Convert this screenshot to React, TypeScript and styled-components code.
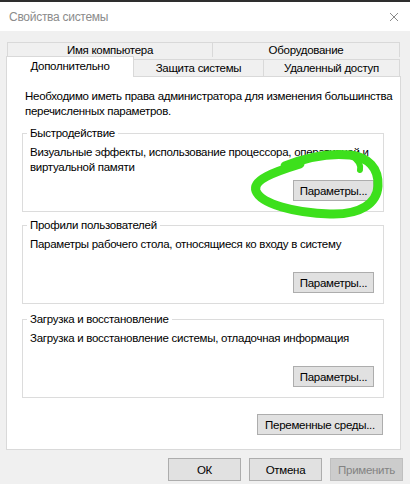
import * as React from 'react';
import styled, { createGlobalStyle } from 'styled-components';

const GlobalStyle = createGlobalStyle`
    html, body {
        margin: 0;
        padding: 0;
        background: #f0f0f0;
    }
    body {
        font-family: "Liberation Sans", Arial, sans-serif;
        font-size: 11.5px;
        letter-spacing: -0.28px;
        color: #000;
    }
`

type Group = {
    title: string,
    lines: string[]
}

const groups: Group[] = [
    { title: 'Быстродействие', lines: ['Визуальные эффекты, использование процессора, оперативной и', 'виртуальной памяти'] },
    { title: 'Профили пользователей', lines: ['Параметры рабочего стола, относящиеся ко входу в систему'] },
    { title: 'Загрузка и восстановление', lines: ['Загрузка и восстановление системы, отладочная информация'] },
]

export default function App() {
    return (
        <Window>
            <GlobalStyle />
            <TopEdge />
            <TitleBar>
                <Title>Свойства системы</Title>
                <svg width="10" height="10" viewBox="0 0 10 10">
                    <path d="M1 1 L9 9 M9 1 L1 9" stroke="#8a8a8a" strokeWidth="1" fill="none" />
                </svg>
            </TitleBar>
            <Body>
                <TabRowBack>
                    <BackTab $width={206}>Имя компьютера</BackTab>
                    <BackTab $width={188}>Оборудование</BackTab>
                </TabRowBack>
                <TabRowFront>
                    <ActiveTab>Дополнительно</ActiveTab>
                    <FrontTab $width={131}>Защита системы</FrontTab>
                    <FrontTab $width={137}>Удаленный доступ</FrontTab>
                </TabRowFront>
                <Panel>
                    <Intro>
                        <Line>Необходимо иметь права администратора для изменения большинства</Line>
                        <Line>перечисленных параметров.</Line>
                    </Intro>
                    {groups.map((g, i) =>
                        <GroupBox key={i} $top={i === 0 ? 7 : i === 1 ? 6 : 8}>
                            <Legend>{g.title}</Legend>
                            <GroupText>
                                {g.lines.map((l, j) => <Line key={j}>{l}</Line>)}
                            </GroupText>
                            <ButtonRow>
                                <Button $width={81} $height={21}>Параметры...</Button>
                            </ButtonRow>
                        </GroupBox>
                    )}
                    <EnvRow>
                        <Button $width={126} $height={21}>Переменные среды...</Button>
                    </EnvRow>
                </Panel>
                <Footer>
                    <Button $width={73} $height={23}>ОК</Button>
                    <Button $width={73} $height={23}>Отмена</Button>
                    <Button $width={73} $height={23} disabled>Применить</Button>
                </Footer>
            </Body>
            <Scribble width="410" height="484" viewBox="0 0 410 484">
                <path
                    d="M300 164 C274 172, 252 180, 256 191 C261 204, 295 213, 330 214 C361 215, 377 203, 378 186 C379 168, 368 157, 350 155 C330 153, 307 157, 285 166"
                    stroke="#3de01c" strokeWidth="9" strokeLinecap="round" fill="none" />
                <path d="M352 156 C358 160, 361 165, 360 170" stroke="#3de01c" strokeWidth="6" strokeLinecap="round" fill="none" />
            </Scribble>
        </Window>
    )
}

const Window = styled.div`
    position: relative;
    width: 410px;
    height: 484px;
    overflow: hidden;
    display: flex;
    flex-direction: column;
    background: #f0f0f0;
`
const TopEdge = styled.div`
    height: 2px;
    background: #2e2e2e;
`
const TitleBar = styled.div`
    height: 29px;
    background: #fff;
    display: flex;
    align-items: center;
    justify-content: space-between;
    padding: 0 11px 0 9px;
`
const Title = styled.span`
    color: #8c8c8c;
    font-size: 12px;
`
const Body = styled.div`
    padding: 11px 7px 0 6px;
    display: flex;
    flex-direction: column;
`
const TabRowBack = styled.div`
    display: flex;
    height: 15px;
    margin-left: 1px;
`
const BackTab = styled.div<{ $width: number }>`
    box-sizing: border-box;
    width: ${p => p.$width}px;
    border: 1px solid #d9d9d9;
    border-bottom: none;
    display: flex;
    align-items: center;
    justify-content: center;
    line-height: 13px;
    white-space: nowrap;
    & + & {
        margin-left: -1px;
    }
`
const TabRowFront = styled.div`
    display: flex;
    align-items: flex-end;
    height: 20px;
`
const ActiveTab = styled.div`
    position: relative;
    z-index: 1;
    box-sizing: border-box;
    width: 128px;
    height: 21px;
    flex-shrink: 0;
    background: #fff;
    border: 1px solid #d9d9d9;
    border-bottom: none;
    display: flex;
    align-items: center;
    justify-content: center;
    padding-bottom: 2px;
    white-space: nowrap;
`
const FrontTab = styled.div<{ $width: number }>`
    box-sizing: border-box;
    width: ${p => p.$width}px;
    height: 17px;
    margin-bottom: 1px;
    margin-left: -1px;
    border: 1px solid #d9d9d9;
    border-bottom: none;
    display: flex;
    align-items: center;
    justify-content: center;
    white-space: nowrap;
`
const Panel = styled.div`
    box-sizing: border-box;
    width: 395px;
    margin-top: -1px;
    background: #fff;
    border: 1px solid #d9d9d9;
    padding: 12px 16px 14px 15px;
    display: flex;
    flex-direction: column;
`
const Line = styled.div`
    white-space: nowrap;
`
const Intro = styled.div`
    padding-left: 3px;
    line-height: 15px;
`
const GroupBox = styled.fieldset<{ $top: number }>`
    margin: ${p => p.$top}px 0 0 0;
    padding: 0 9px 10px 7px;
    border: 1px solid #dcdcdc;
    min-width: 0;
`
const Legend = styled.legend`
    padding: 0 3px;
    margin-left: -3px;
    line-height: 15px;
`
const GroupText = styled.div`
    margin-top: 4px;
    min-height: 30px;
    line-height: 15px;
`
const ButtonRow = styled.div`
    display: flex;
    justify-content: flex-end;
    margin-top: 5px;
`
const EnvRow = styled.div`
    display: flex;
    justify-content: flex-end;
    margin: 16px 1px 0 0;
`
const Button = styled.button<{ $width: number, $height: number }>`
    box-sizing: border-box;
    width: ${p => p.$width}px;
    height: ${p => p.$height}px;
    padding: 0;
    background: #e1e1e1;
    border: 1px solid #adadad;
    font-family: inherit;
    font-size: 11.5px;
    letter-spacing: inherit;
    color: #000;
    white-space: nowrap;
    &:disabled {
        background: #cccccc;
        border-color: #bfbfbf;
        color: #838383;
    }
`
const Footer = styled.div`
    display: flex;
    justify-content: flex-end;
    gap: 8px;
    margin-top: 8px;
`
const Scribble = styled.svg`
    position: absolute;
    top: 0;
    left: 0;
    pointer-events: none;
`
